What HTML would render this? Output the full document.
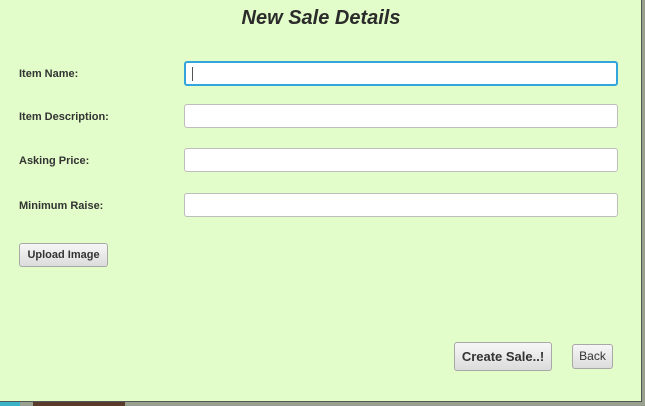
<!DOCTYPE html>
<html><head><style>
body{margin:0;width:645px;height:406px;overflow:hidden;background:#9aa08f;position:relative;font-family:"Liberation Sans",sans-serif}
.strip{position:absolute;top:402px;height:4px}
#p{position:absolute;left:0;top:0;width:641px;height:401px;background:#e2fdc9;border-right:1px solid #555;border-bottom:1px solid #555}
h1{position:absolute;left:0;width:642px;top:7px;margin:0;text-align:center;font-size:20px;font-style:italic;font-weight:bold;color:#2b2b2b}
.l{position:absolute;left:19px;font-size:11px;font-weight:bold;color:#333}
.i{position:absolute;left:184px;width:434px;height:23px;background:#fff;border:1px solid #bdbdbd;border-radius:3px;box-sizing:border-box}
.b{position:absolute;background:linear-gradient(#f6f6f6,#dcdcdc);border:1px solid #a8a8a8;border-radius:3px;box-sizing:border-box;text-align:center;color:#333;font-size:11px}
</style></head><body>
<div class="strip" style="left:0;width:20px;background:#3ab3c8"></div>
<div class="strip" style="left:33px;width:92px;background:#5a3a2c"></div>
<div id="p">
<h1>New Sale Details</h1>
<div class="l" style="top:68px">Item Name:</div>
<div class="i" style="top:61px;height:25px;border:2px solid #33a5dc"><div style="position:absolute;left:6px;top:4px;width:1px;height:14px;background:#555"></div></div>
<div class="l" style="top:111px">Item Description:</div>
<div class="i" style="top:104px;height:24px"></div>
<div class="l" style="top:155px">Asking Price:</div>
<div class="i" style="top:148px;height:24px"></div>
<div class="l" style="top:200px">Minimum Raise:</div>
<div class="i" style="top:193px;height:24px"></div>
<div class="b" style="left:19px;top:243px;width:89px;height:24px;line-height:22px;font-weight:bold">Upload Image</div>
<div class="b" style="left:454px;top:342px;width:98px;height:29px;line-height:27px;font-weight:bold;font-size:13px">Create Sale..!</div>
<div class="b" style="left:572px;top:344px;width:41px;height:25px;line-height:23px;font-size:12px">Back</div>
</div>
</body></html>
